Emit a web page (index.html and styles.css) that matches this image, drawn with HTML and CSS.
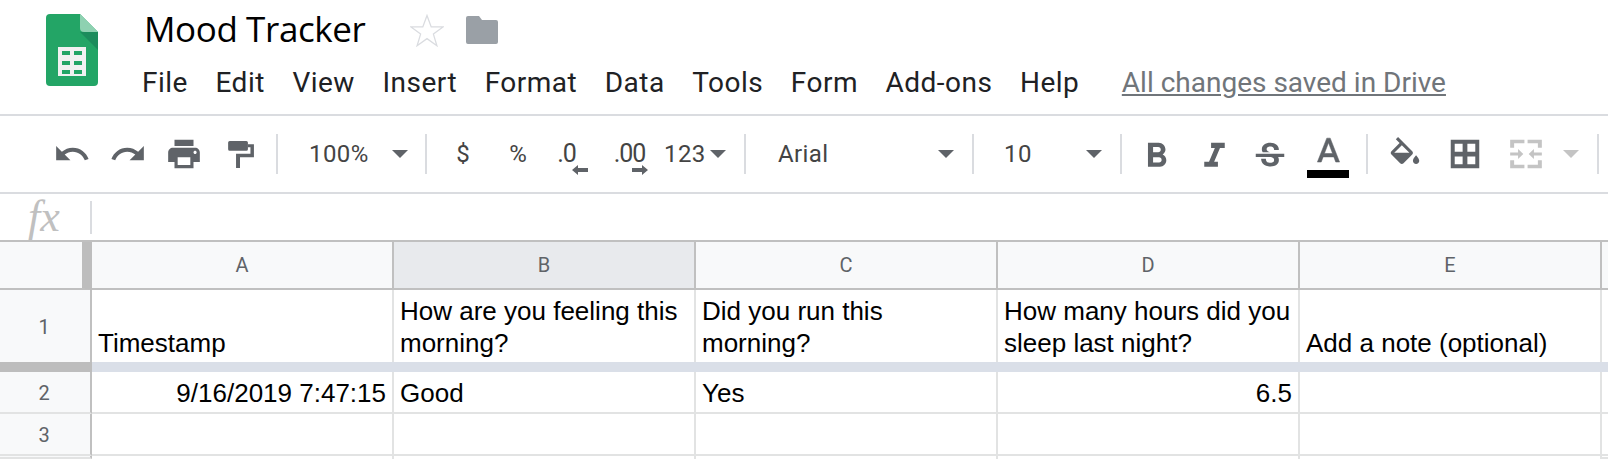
FILE: index.html
```html
<!DOCTYPE html>
<html lang="en">
<head>
<meta charset="utf-8">
<title>Mood Tracker</title>
<link rel="stylesheet" href="styles.css">
</head>
<body>
<header class="titlebar">
  <svg class="logo" viewBox="0 0 52 72" aria-hidden="true">
    <path d="M4 0H34L52 18V68a4 4 0 0 1-4 4H4a4 4 0 0 1-4-4V4a4 4 0 0 1 4-4z" fill="#23a566"/>
    <path d="M34 18L52 36V18z" fill="#1c8c5c"/>
    <path d="M34 0L52 18H38a4 4 0 0 1-4-4z" fill="#8ed1b1"/>
    <path d="M12 33H40V62H12z" fill="#f1f1f1"/>
    <path d="M16 37H24V41H16zM28 37H36V41H28zM16 47H24V51H16zM28 47H36V51H28zM16 56H24V60H16zM28 56H36V60H28z" fill="#23a566"/>
  </svg>
  <div class="titlecol">
    <div class="nameline">
      <span class="docname">Mood Tracker</span>
      <svg class="star" viewBox="0 0 34 33" aria-hidden="true"><path d="M17 1.500l4.200 11.400H33l-9.600 7.200 3.500 11.600L17 24.600 7.100 31.700l3.500-11.600L1 12.900h11.800z" fill="none" stroke="#dadce0" stroke-width="1.300"/></svg>
      <svg class="folder" viewBox="0 0 32 28" aria-hidden="true"><path d="M2 0H13L16 4H30a2 2 0 0 1 2 2V26a2 2 0 0 1-2 2H2a2 2 0 0 1-2-2V2a2 2 0 0 1 2-2z" fill="#9aa0a6"/></svg>
    </div>
    <nav class="menu">
      <span>File</span><span>Edit</span><span>View</span><span>Insert</span><span>Format</span><span>Data</span><span>Tools</span><span>Form</span><span>Add-ons</span><span>Help</span>
      <a class="saved">All changes saved in Drive</a>
    </nav>
  </div>
</header>

<div class="toolbar">
  <span class="tool"><svg class="ico" viewBox="0 0 24 24"><path d="M12.500 8c-2.650 0-5.050.99-6.900 2.600L2 7v9h9l-3.620-3.620c1.390-1.160 3.160-1.880 5.120-1.880 3.540 0 6.550 2.310 7.600 5.500l2.370-.78C21.080 11.030 17.150 8 12.500 8z"/></svg></span>
  <span class="tool"><svg class="ico" viewBox="0 0 24 24"><path d="M18.400 10.600C16.550 8.990 14.150 8 11.500 8c-4.650 0-8.580 3.030-9.960 7.220L3.900 16c1.050-3.190 4.050-5.500 7.600-5.500 1.950 0 3.730.72 5.120 1.880L13 16h9V7l-3.600 3.600z"/></svg></span>
  <span class="tool"><svg class="ico" viewBox="0 0 24 24"><path d="M19 8H5c-1.660 0-3 1.340-3 3v6h4v4h12v-4h4v-6c0-1.660-1.340-3-3-3zm-3 11H8v-5h8v5zm3-7c-.55 0-1-.45-1-1s.45-1 1-1 1 .45 1 1-.45 1-1 1zm-1-9H6v4h12V3z"/></svg></span>
  <span class="tool"><svg class="ico" viewBox="0 0 24 24"><path d="M5.500 3.800H16a1 1 0 0 1 1 1V9a1 1 0 0 1-1 1H5.500a1 1 0 0 1-1-1V4.800a1 1 0 0 1 1-1z"/><path d="M17 5.800H20.800V14H12V20.800H9.500V11.800H18.600V7.800H17z"/></svg></span>
  <i class="sep s1"></i>
  <span class="drop zoomdrop"><span>100%</span><b class="caret"></b></span>
  <i class="sep"></i>
  <span class="tool txt dollar">$</span>
  <span class="tool txt pct">%</span>
  <span class="tool dec"><span class="dectxt">.0</span><svg class="arrow" viewBox="0 0 16 10"><path d="M0 5L6 0V3H16V7H6V10z"/></svg></span>
  <span class="tool dec dec2"><span class="dectxt">.00</span><svg class="arrow" viewBox="0 0 16 10"><path d="M16 5L10 0V3H0V7H10V10z"/></svg></span>
  <span class="drop numdrop"><span>123</span><b class="caret"></b></span>
  <i class="sep"></i>
  <span class="drop fontdrop"><span>Arial</span><b class="caret"></b></span>
  <i class="sep"></i>
  <span class="drop sizedrop"><span>10</span><b class="caret"></b></span>
  <i class="sep"></i>
  <span class="tool fmt fb"><svg class="ico big" viewBox="0 0 24 24"><path d="M15.600 10.790c.97-.67 1.650-1.770 1.650-2.790 0-2.260-1.750-4-4-4H7v14h7.040c2.090 0 3.710-1.700 3.710-3.790 0-1.520-.86-2.820-2.150-3.420zM10 6.500h3c.83 0 1.500.67 1.500 1.500s-.67 1.500-1.500 1.500h-3v-3zm3.500 9H10v-3h3.500c.83 0 1.500.67 1.500 1.500s-.67 1.500-1.500 1.500z"/></svg></span>
  <span class="tool fmt fi"><svg class="ico big" viewBox="0 0 24 24"><path d="M10 4v3h2.210l-3.420 8H6v3h8v-3h-2.210l3.420-8H18V4z"/></svg></span>
  <span class="tool fmt"><svg class="ico strike" viewBox="0 0 24 24"><path d="M7.240 8.750c-.26-.48-.39-1.030-.39-1.670 0-.61.13-1.160.4-1.670.26-.5.63-.93 1.110-1.290.48-.35 1.050-.63 1.700-.83.66-.19 1.390-.29 2.180-.29.81 0 1.540.11 2.210.34.66.22 1.230.54 1.690.94.47.4.83.88 1.080 1.430s.38 1.150.38 1.810h-3.010c0-.31-.05-.59-.15-.85-.09-.27-.24-.49-.44-.68-.2-.19-.45-.33-.75-.44-.3-.1-.66-.16-1.060-.16-.39 0-.74.04-1.030.13s-.53.21-.72.36c-.19.16-.34.34-.44.55-.1.21-.15.43-.15.66 0 .48.25.88.74 1.210.38.25.77.48 1.410.7H7.390c-.05-.08-.11-.17-.15-.25zM21 12v-2H3v2h9.620c.18.07.4.14.55.2.37.17.66.34.87.51.21.17.35.36.43.57.07.2.11.43.11.69 0 .23-.05.45-.14.66-.09.2-.23.38-.42.53-.19.15-.42.26-.71.35-.29.08-.63.13-1.010.13-.43 0-.83-.04-1.180-.13s-.66-.23-.91-.42c-.25-.19-.45-.44-.59-.75-.14-.31-.25-.76-.25-1.210H6.400c0 .55.08 1.130.24 1.580.16.45.37.85.65 1.210.28.35.6.66.98.92.37.26.78.48 1.220.65.44.17.9.3 1.380.39.48.08.96.13 1.440.13.8 0 1.530-.09 2.180-.28s1.210-.45 1.670-.79c.46-.34.82-.77 1.070-1.270s.38-1.070.38-1.710c0-.6-.1-1.140-.31-1.610-.05-.11-.11-.23-.17-.33H21z"/></svg></span>
  <span class="tool fmt colorbtn"><span class="fontA"><svg class="ico big" viewBox="0 0 24 24"><path d="M11 3L5.500 17h2.250l1.120-3h6.240l1.120 3h2.250L13 3h-2zm-1.380 9L12 5.670 14.380 12H9.620z"/></svg></span><b class="colorbar"></b></span>
  <i class="sep s6"></i>
  <span class="tool fmt fill"><svg class="ico" viewBox="0 0 24 24"><path d="M16.560 8.940L7.620 0 6.210 1.410l2.380 2.380-5.150 5.150c-.59.59-.59 1.540 0 2.120l5.500 5.500c.29.29.68.44 1.060.44s.77-.15 1.060-.44l5.500-5.500c.59-.58.59-1.530 0-2.120zM5.210 10L10 5.210 14.790 10H5.210zM19 11.500s-2 2.170-2 3.500c0 1.100.9 2 2 2s2-.9 2-2c0-1.330-2-3.500-2-3.500z"/></svg></span>
  <span class="tool fmt grid"><svg class="ico" viewBox="0 0 24 24"><path fill-rule="evenodd" d="M3 3v18h18V3H3zm7.500 15.500H5.500v-5h5zm0-8H5.500v-5h5zm8 8h-5v-5h5zm0-8h-5v-5h5z"/></svg></span>
  <span class="tool fmt merge"><svg class="ico" viewBox="0 0 24 24"><path d="M2 3h9v2.200H4.500V8H2zM13 3h9v5h-2.500V5.200H13zM2 16h2.500v2.800H11V21H2zM19.500 16H22v5h-9v-2.200h6.500zM2 11h5V8.800l3.300 3.200L7 15.200V13H2zM22 11h-5V8.800L13.700 12 17 15.200V13h5z"/></svg></span>
  <b class="caret off"></b>
  <i class="sep"></i>
</div>

<div class="formula">
  <span class="fx">fx</span>
  <i class="fxsep"></i>
</div>

<div class="sheet">
  <div class="row head">
    <div class="rowh corner"></div>
    <div class="colh">A</div><div class="colh sel">B</div><div class="colh">C</div><div class="colh">D</div><div class="colh">E</div><div class="rest"></div>
  </div>
  <div class="row r1">
    <div class="rowh">1</div>
    <div class="cell">Timestamp</div>
    <div class="cell">How are you feeling this morning?</div>
    <div class="cell">Did you run this morning?</div>
    <div class="cell">How many hours did you sleep last night?</div>
    <div class="cell">Add a note (optional)</div>
    <div class="rest"></div>
  </div>
  <div class="freeze"><div class="fleft"></div><div class="fright"></div></div>
  <div class="row r2">
    <div class="rowh">2</div>
    <div class="cell num">9/16/2019 7:47:15</div>
    <div class="cell">Good</div>
    <div class="cell">Yes</div>
    <div class="cell num">6.5</div>
    <div class="cell"></div>
    <div class="rest"></div>
  </div>
  <div class="row r2">
    <div class="rowh">3</div>
    <div class="cell"></div><div class="cell"></div><div class="cell"></div><div class="cell"></div><div class="cell"></div><div class="rest"></div>
  </div>
  <div class="row rlast">
    <div class="rowh"></div>
    <div class="cell"></div><div class="cell"></div><div class="cell"></div><div class="cell"></div><div class="cell"></div><div class="rest"></div>
  </div>
</div>
</body>
</html>
```
FILE: styles.css
```css
* { box-sizing: border-box; }
html, body { margin: 0; padding: 0; }
body { width: 1608px; height: 460px; overflow: hidden; background: #fff; font-family: Roboto, sans-serif; color: #202124; }

/* title bar */
.titlebar { height: 116px; display: flex; border-bottom: 2px solid #dadce0; padding-left: 46px; }
.logo { width: 52px; height: 72px; margin-top: 14px; flex: none; }
.titlecol { margin-left: 44px; display: flex; flex-direction: column; }
.nameline { display: flex; align-items: center; height: 60px; padding-left: 3px; }
.docname { font-family: "Open Sans", sans-serif; font-size: 35px; color: #000; letter-spacing: -.4px; width: 265px; flex: none; padding-bottom: 3px; margin-left: -1px; }
.star { width: 34px; height: 33px; flex: none; margin-left: 1px; }
.folder { width: 32px; height: 28px; margin-left: 22px; flex: none; }
.menu { display: flex; align-items: center; height: 44px; font-size: 28px; letter-spacing: .5px; color: #202124; gap: 27.5px; white-space: nowrap; }
.saved { margin-left: 15px; color: #70757a; text-decoration: underline; letter-spacing: 0; }

/* toolbar */
.toolbar { height: 78px; display: flex; align-items: center; padding-left: 44px; border-bottom: 2px solid #dadce0; color: #444; }
.tool { width: 56px; height: 40px; display: flex; align-items: center; justify-content: center; flex: none; position: relative; }
.ico { width: 38px; height: 38px; fill: #5f6368; display: block; flex: none; }
.big { width: 41px; height: 41px; margin-top: 4px; }
.strike { margin-top: 6px; }
.sep { width: 2px; height: 40px; background: #dadce0; flex: none; }
.s1 { margin-left: 8px; }
.s6 { margin-left: 10px; }
.drop { display: flex; align-items: center; justify-content: space-between; font-size: 24px; color: #444; letter-spacing: .4px; flex: none; }
.caret { width: 0; height: 0; border-left: 8px solid transparent; border-right: 8px solid transparent; border-top: 8px solid #5f6368; flex: none; }
.caret.off { border-top-color: #c4c4c4; margin: 0 18px 0 9px; }
.zoomdrop { width: 147px; padding: 0 17px 0 31px; }
.txt { font-size: 24px; color: #444; }
.dollar { width: 52px; margin-left: 10px; }
.pct { width: 52px; margin-left: 3px; }
.dec { width: 46px; display: block; }
.dec2 { width: 44px; margin-left: 18px; }
.dectxt { display: block; font-size: 25px; color: #444; line-height: 40px; text-align: center; letter-spacing: -1px; margin-left: -1px; }
.arrow { position: absolute; width: 16px; height: 10px; fill: #5f6368; right: 2px; top: 31px; }
.dec2 .arrow { right: 4px; }
.numdrop { width: 92px; padding: 0 18px 0 12px; }
.fontdrop { width: 226px; padding: 0 18px 0 32px; }
.sizedrop { width: 146px; padding: 0 18px 0 30px; }
.fmt { width: 56px; }
.fb { margin-left: 6px; }
.fi { margin-left: 2px; }
.colorbtn { display: block; height: 56px; margin-left: 2px; }
.fontA { display: flex; justify-content: center; height: 30px; margin-top: 7px; }
.fontA .ico { margin-top: 0; stroke: #5f6368; stroke-width: .3; }
.colorbar { display: block; width: 42px; height: 8px; background: #000; margin: 7px auto 0; }
.fill { margin-left: 9px; }
.fill .ico { margin-top: 4px; }
.grid { margin-left: 4px; }
.merge { margin-left: 5px; }
.merge .ico { fill: #c4c4c4; }

/* formula bar */
.formula { height: 46px; display: flex; align-items: center; }
.fx { width: 90px; padding-left: 28px; font-family: "Liberation Serif", serif; font-style: italic; font-size: 44px; line-height: 46px; color: #c0c0c0; flex: none; }
.fxsep { width: 2px; height: 33px; background: #dadce0; }

/* sheet */
.sheet { border-top: 2px solid #c0c0c0; font-family: "Liberation Sans", Arial, sans-serif; font-size: 26px; color: #000; }
.row { display: flex; }
.head { height: 48px; }
.r1 { height: 72px; }
.r2 { height: 42px; }
.rlast { height: 3px; overflow: hidden; }
.rowh { width: 92px; flex: none; background: #f8f9fa; border-right: 2px solid #c0c0c0; border-bottom: 2px solid #e2e3e3; font-family: Roboto, sans-serif; font-size: 20px; color: #5f6368; display: flex; align-items: center; justify-content: center; padding: 1px 2px 0 0; }
.corner { border-right: 10px solid #bdbdbd; border-bottom: 2px solid #c0c0c0; padding: 0; }
.colh { width: 302px; flex: none; background: #f8f9fa; border-right: 2px solid #c0c0c0; border-bottom: 2px solid #c0c0c0; font-family: Roboto, sans-serif; font-size: 20px; color: #5f6368; display: flex; align-items: center; justify-content: center; }
.colh.sel { background: #e8eaed; }
.head .rest { flex: 1; background: #f8f9fa; border-bottom: 2px solid #c0c0c0; }
.cell { width: 302px; flex: none; border-right: 2px solid #e2e3e3; border-bottom: 2px solid #e2e3e3; padding: 0 6px 3px; line-height: 32px; display: flex; align-items: flex-end; }
.num { justify-content: flex-end; text-align: right; }
.rest { flex: 1; border-bottom: 2px solid #e2e3e3; }
.r1 .cell { border-bottom: 0; }
.r1 .rest { border-bottom: 0; }
.r1 .rowh { border-bottom: 0; }
.freeze { display: flex; height: 10px; }
.fleft { width: 92px; background: #bdbdbd; }
.fright { flex: 1; background: #dadfe8; }
```
